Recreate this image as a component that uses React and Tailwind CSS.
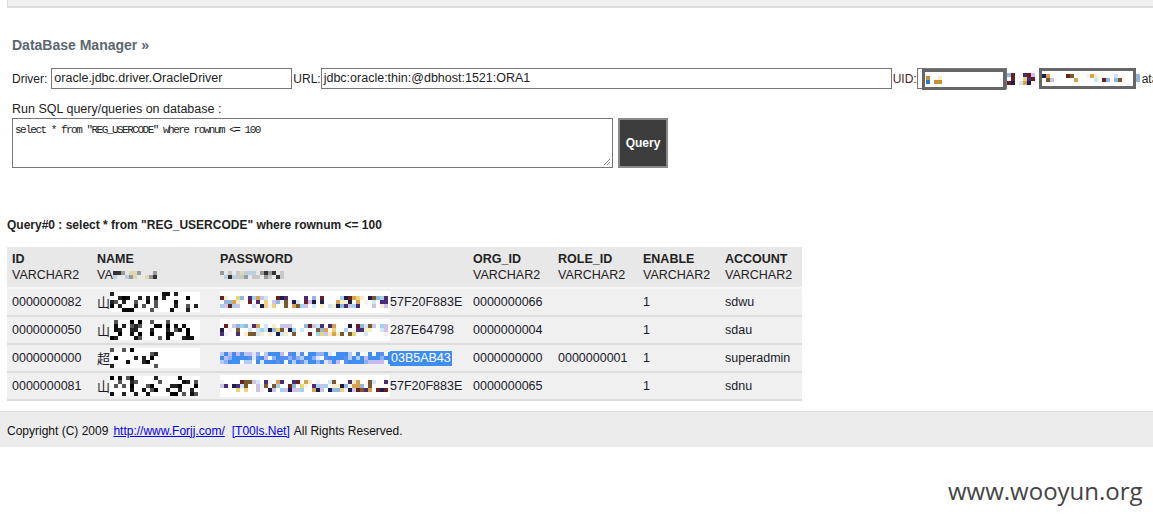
import React from "react";

function rng(seed) {
  let s = seed >>> 0;
  return () => {
    s = (s * 1664525 + 1013904223) >>> 0;
    return s / 4294967296;
  };
}

function Mosaic({ w, h, seed, palette, bg = "#ffffff", cell = 4, fill = 0.6 }) {
  const r = rng(seed);
  const rects = [];
  const cols = Math.floor(w / cell);
  const rows = Math.floor(h / cell);
  for (let y = 0; y < rows; y++) {
    for (let x = 0; x < cols; x++) {
      if (r() < fill) {
        const c = palette[Math.floor(r() * palette.length)];
        rects.push(<rect key={x + "-" + y} x={x * cell} y={y * cell} width={cell} height={cell} fill={c} />);
      }
    }
  }
  return (
    <svg width={w} height={h} className="inline-block align-middle shrink-0">
      <rect width={w} height={h} fill={bg} />
      {rects}
    </svg>
  );
}

const colorPal = ["#f6ecc8", "#cfe6f6", "#8fb8dc", "#6b1f1f", "#4b2a78", "#d9a24a", "#9ed3f2", "#1d1d4d", "#cdc3ea", "#ead475", "#ffffff", "#f1f1f1", "#7a5a2a"];
const darkPal = ["#000000", "#111111", "#222222", "#ffffff", "#555555"];
const selPal = ["#ffffff", "#dfe6ff", "#b7c8ff", "#8fb0f8", "#c8b8f0", "#5a8ef0"];

const rows = [
  { id: "0000000082", ch: "山", nameSeed: 3, pwSeed: 11, pw: "57F20F883E", org: "0000000066", role: "", en: "1", acc: "sdwu" },
  { id: "0000000050", ch: "山", nameSeed: 5, pwSeed: 17, pw: "287E64798", org: "0000000004", role: "", en: "1", acc: "sdau" },
  { id: "0000000000", ch: "超", nameSeed: 7, pwSeed: 23, pw: "03B5AB43", org: "0000000000", role: "0000000001", en: "1", acc: "superadmin", sel: true },
  { id: "0000000081", ch: "山", nameSeed: 9, pwSeed: 29, pw: "57F20F883E", org: "0000000065", role: "", en: "1", acc: "sdnu" },
];

const cols = [
  { n: "ID", w: "w-[85px]" },
  { n: "NAME", w: "w-[123px]" },
  { n: "PASSWORD", w: "w-[253px]" },
  { n: "ORG_ID", w: "w-[85px]" },
  { n: "ROLE_ID", w: "w-[85px]" },
  { n: "ENABLE", w: "w-[82px]" },
  { n: "ACCOUNT", w: "w-[77px]" },
];

export default function App() {
  return (
    <div className="w-[1153px] h-[520px] bg-white relative overflow-hidden text-[#222] font-['Liberation_Sans',Arial,sans-serif] text-[12px]">
      <div className="ml-[7px] h-[8px] bg-[#f0f0f0] border-l border-b-2 border-[#dddddd]" />

      <div className="px-[12px]">
        <div className="mt-[28px] text-[14px] leading-[18px] font-bold text-[#5d6670]">DataBase Manager »</div>

        <div className="mt-[14px] flex items-center h-[21px] whitespace-nowrap text-[12px]">
          <span className="mr-[4px] shrink-0">Driver:</span>
          <div className="shrink-0 w-[241px] h-[21px] border border-[#777] px-[2px] leading-[19px] text-[12.5px]">oracle.jdbc.driver.OracleDriver</div>
          <span className="ml-[1px] shrink-0">URL:</span>
          <div className="shrink-0 w-[571px] h-[21px] border border-[#777] px-[2px] leading-[19px] text-[12.5px]">jdbc:oracle:thin:@dbhost:1521:ORA1</div>
          <span className="ml-[1px] shrink-0 text-[#4a1a1a]">UID:</span>
          <div className="shrink-0 relative w-[90px] h-[21px] border border-[#777] bg-white">
            <div className="absolute left-[4px] top-0 right-0 h-[21px] border-[3px] border-[#666] bg-white flex items-center pl-[1px]">
              <Mosaic w={16} h={8} seed={41} palette={["#f6ecc8", "#2a7ac8", "#ffffff", "#c89030"]} fill={0.7} />
            </div>
          </div>
          <Mosaic w={32} h={12} seed={43} palette={colorPal} fill={0.7} />
          <div className="shrink-0 w-[97px] h-[21px] border-[3px] border-[#666] bg-white flex items-center">
            <Mosaic w={80} h={10} seed={47} palette={colorPal} fill={0.5} />
          </div>
          <Mosaic w={5} h={10} seed={51} palette={["#1d1d4d", "#8fb8dc"]} fill={0.8} />
          <span className="ml-[1px] shrink-0">ata</span>
        </div>

        <div className="mt-[13px] leading-[14px] text-[12.5px]">Run SQL query/queries on database :</div>
        <div className="mt-[2px] flex items-start gap-[5px]">
          <div className="shrink-0 relative w-[601px] h-[50px] border border-[#777] bg-white px-[2px] pt-[5px] font-['Liberation_Mono','Courier_New',monospace] text-[11px] tracking-[-1.5px] leading-[13px] text-[#222] whitespace-pre">
            {'select * from "REG_USERCODE" where rownum <= 100'}
            <svg className="absolute right-[1px] bottom-[1px]" width="8" height="8" viewBox="0 0 8 8">
              <path d="M7 1 L1 7 M7 4 L4 7" stroke="#888" strokeWidth="1" fill="none" />
            </svg>
          </div>
          <div className="shrink-0 w-[50px] h-[50px] bg-[#3c3c3c] border-2 border-[#8a8a8a] flex items-center justify-center text-white font-bold text-[12px]">Query</div>
        </div>
      </div>

      <div className="px-[7px]">
        <div className="mt-[50px] font-bold leading-[14px]">Query#0 : select * from "REG_USERCODE" where rownum &lt;= 100</div>

        <div className="mt-[15px] w-[795px] text-[12.5px]">
          <div className="flex bg-[#e8e8e8] h-[42px] border-b-2 border-[#f6f6f6]">
            {cols.map((c) => (
              <div key={c.n} className={`${c.w} shrink-0 pl-[5px] pt-[4px] leading-[16px]`}>
                <div className="font-bold">{c.n}</div>
                {c.n === "NAME" ? (
                  <div className="flex items-center">VA<Mosaic w={46} h={8} seed={61} palette={["#c8c8c8", "#9a9a9a", "#e0d8b0", "#b8d0e0", "#333"]} fill={0.6} bg="#e8e8e8" /></div>
                ) : c.n === "PASSWORD" ? (
                  <div className="flex items-center h-[16px]"><Mosaic w={66} h={8} seed={67} palette={["#c8c8c8", "#9a9a9a", "#e0d8b0", "#b8d0e0", "#333"]} fill={0.6} bg="#e8e8e8" /></div>
                ) : (
                  <div>VARCHAR2</div>
                )}
              </div>
            ))}
          </div>
          {rows.map((r) => (
            <div key={r.id} className="flex items-center h-[28px] bg-[#f0f0f0] border-b-2 border-[#dcdcdc] text-[#1a1a2a]">
              <div className="w-[85px] shrink-0 pl-[5px]">{r.id}</div>
              <div className="w-[123px] shrink-0 pl-[5px] flex items-center">
                <span className="font-['Noto_Sans_CJK_SC',sans-serif] text-[13px] leading-[16px]">{r.ch}</span>
                <Mosaic w={r.sel ? 50 : 90} h={20} seed={r.nameSeed} palette={darkPal} fill={0.35} />
                {r.sel && <div className="w-[40px] h-[20px] bg-white" />}
              </div>
              <div className="w-[253px] shrink-0 pl-[5px] flex items-center">
                {r.sel ? (
                  <>
                    <Mosaic w={170} h={12} seed={r.pwSeed} palette={selPal} fill={0.55} bg="#3d8ef0" />
                    <span className="bg-[#3d8ef0] text-white px-[1px] leading-[15px]">{r.pw}</span>
                  </>
                ) : (
                  <>
                    <div className="bg-white h-[22px] flex items-center">
                      <Mosaic w={170} h={12} seed={r.pwSeed} palette={colorPal} fill={0.65} />
                    </div>
                    <span>{r.pw}</span>
                  </>
                )}
              </div>
              <div className="w-[85px] shrink-0 pl-[5px]">{r.org}</div>
              <div className="w-[85px] shrink-0 pl-[5px]">{r.role}</div>
              <div className="w-[82px] shrink-0 pl-[5px]">{r.en}</div>
              <div className="w-[77px] shrink-0 pl-[5px]">{r.acc}</div>
            </div>
          ))}
        </div>
      </div>

      <div className="mt-[10px] bg-[#ececec] border-t border-[#dddddd] h-[36px] flex items-center pt-[2px] px-[7px] text-[12px] text-[#111]">
        Copyright (C) 2009
        <a className="text-[#0000ee] underline ml-[5px]">http://www.Forjj.com/</a>
        <a className="text-[#0000ee] underline ml-[7px]">[T00ls.Net]</a>
        <span className="ml-[4px]">All Rights Reserved.</span>
      </div>

      <div className="absolute left-[948px] top-[475px] text-[24px] leading-[32px] text-[#444] font-['Open_Sans',sans-serif]">www.wooyun.org</div>
    </div>
  );
}
